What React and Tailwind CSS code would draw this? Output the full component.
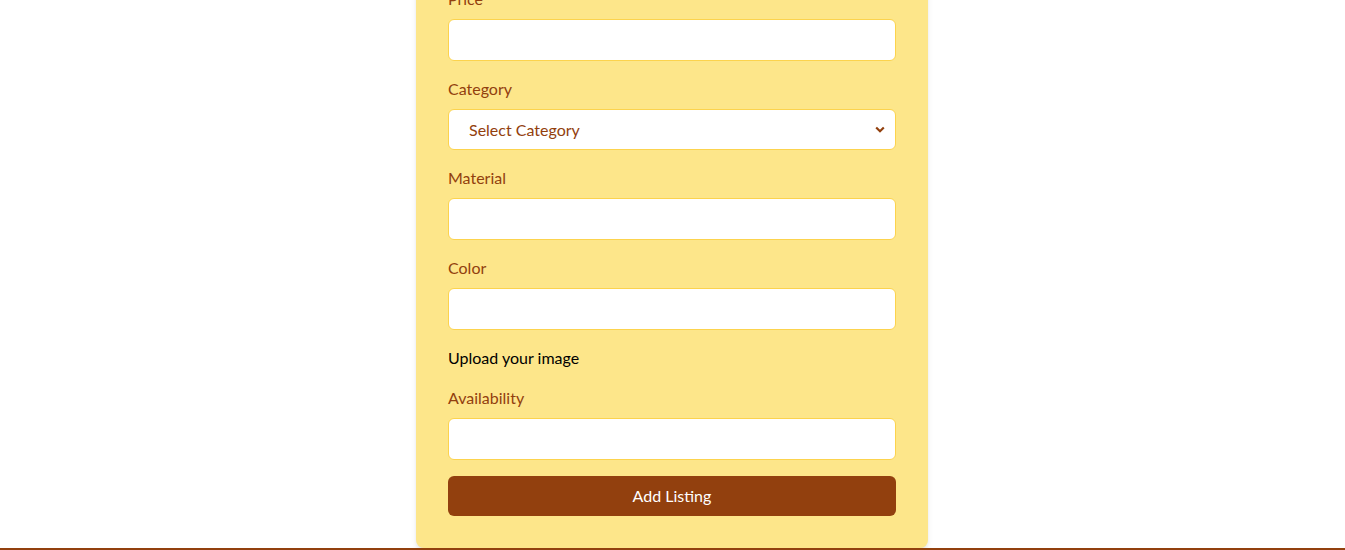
export default function App() {
  const inputCls =
    "block w-full h-[42px] px-3 py-2 bg-white border border-[#fcd34d] rounded-md text-[#92400e] outline-none";
  const labelCls = "block mb-2 text-[#92400e] leading-6";
  return (
    <div
      className="h-[550px] overflow-hidden bg-white flex flex-col"
      style={{ fontFamily: '"Segoe UI", Lato, "Noto Sans", sans-serif' }}
    >
      <div className="h-[548px] overflow-hidden pr-px">
        <div className="w-[512px] mx-auto -mt-[45px] bg-[#fde68a] rounded-lg shadow-md px-8 pt-8 pb-8 text-base">
          <div className="mb-4">
            <label className={labelCls}>Price</label>
            <input className={inputCls} />
          </div>
          <div className="mb-4">
            <label className={labelCls}>Category</label>
            <div className="flex items-center w-full h-[41px] pl-5 pr-3 bg-white border border-[#fcd34d] rounded-md text-[#92400e]">
              <span className="flex-1">Select Category</span>
              <svg width="10" height="7" viewBox="0 0 10 7" className="mr-[-2px]">
                <path d="M1.2 1.5 L5 5.2 L8.8 1.5" fill="none" stroke="#92400e" strokeWidth="2.2" />
              </svg>
            </div>
          </div>
          <div className="mb-4">
            <label className={labelCls}>Material</label>
            <input className={inputCls} />
          </div>
          <div className="mb-4">
            <label className={labelCls}>Color</label>
            <input className={inputCls} />
          </div>
          <div className="mb-4">
            <label className="block text-black leading-6">Upload your image</label>
          </div>
          <div className="mb-4">
            <label className={labelCls}>Availability</label>
            <input className={inputCls} />
          </div>
          <button className="block w-full h-10 bg-[#92400e] text-white rounded-md leading-6">
            Add Listing
          </button>
        </div>
      </div>
      <div className="border-t-2 border-[#92400e] flex-1" />
    </div>
  );
}
